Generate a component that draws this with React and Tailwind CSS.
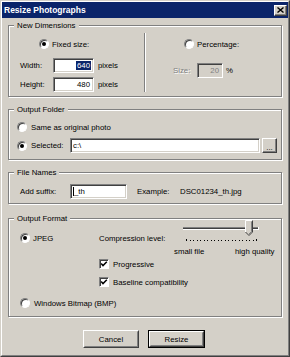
import React from "react";

function Radio({ checked }) {
  return (
    <span className="inline-flex w-[10px] h-[10px] shrink-0 rounded-full bg-white border border-t-[#808080] border-l-[#808080] border-r-white border-b-white shadow-[inset_1px_1px_0_#404040] items-center justify-center">
      {checked && <span className="w-[4px] h-[4px] rounded-full bg-black" />}
    </span>
  );
}

function Check() {
  return (
    <span className="inline-flex w-[10px] h-[10px] shrink-0 bg-white border border-t-[#808080] border-l-[#808080] border-r-white border-b-white shadow-[inset_1px_1px_0_#404040] items-center justify-center">
      <svg width="8" height="8" viewBox="0 0 8 8">
        <path d="M1.2 3.6 L3 5.6 L6.8 1.8" stroke="#000" strokeWidth="1.5" fill="none" />
      </svg>
    </span>
  );
}

function Group({ label, className, children }) {
  return (
    <div className={`relative border border-[#808080] shadow-[inset_1px_1px_0_#fff,1px_1px_0_#fff] ${className}`}>
      <span className="absolute left-[5px] top-[-5px] bg-[#d4d0c8] px-[3px] leading-[9px]">{label}</span>
      {children}
    </div>
  );
}

const fieldCls =
  "h-[15px] shrink-0 flex items-center border border-t-[#808080] border-l-[#808080] border-r-white border-b-white shadow-[inset_1px_1px_0_#404040,inset_-1px_-1px_0_#d4d0c8]";

function Slider() {
  const ticks = [];
  for (let i = 0; i <= 20; i++) {
    const x = Math.round(4 + i * 3.5);
    const end = i === 0 || i === 20;
    ticks.push(<rect key={i} x={x} y={end ? 19 : 20} width="1" height={end ? 2 : 1} fill="#000" />);
  }
  return (
    <svg width="80" height="22" viewBox="0 0 80 22" className="shrink-0">
      <rect x="1" y="7" width="75" height="1" fill="#808080" />
      <rect x="1" y="8" width="75" height="1" fill="#404040" />
      <rect x="1" y="9" width="76" height="1" fill="#fff" />
      <rect x="76" y="7" width="1" height="3" fill="#fff" />
      <path d="M63 0 H71 V12 L67 16 L63 12 Z" fill="#d4d0c8" />
      <polyline points="63.5,12 63.5,0.5 70.5,0.5" fill="none" stroke="#fff" strokeWidth="1" />
      <polyline points="70.5,0.5 70.5,12 67,15.5 63.5,12" fill="none" stroke="#404040" strokeWidth="1" />
      <polyline points="69.5,1.5 69.5,11.6 67,14" fill="none" stroke="#808080" strokeWidth="1" />
      {ticks}
    </svg>
  );
}

function Button({ children, isDefault, className }) {
  const inner = (
    <div className="h-full w-full border border-t-white border-l-white border-r-[#404040] border-b-[#404040]">
      <div className="h-full w-full border border-t-[#d4d0c8] border-l-[#d4d0c8] border-r-[#808080] border-b-[#808080] flex items-center justify-center">
        {children}
      </div>
    </div>
  );
  return (
    <div className={`h-[18px] ${className} ${isDefault ? "border border-black" : ""}`}>{inner}</div>
  );
}

export default function App() {
  return (
    <div className="w-[290px] h-[357px] bg-[#d4d0c8] border border-t-[#d4d0c8] border-l-[#d4d0c8] border-r-[#404040] border-b-[#404040] font-['Liberation_Sans',Arial,sans-serif] text-[7.8px] leading-[9px] text-black select-none">
      <div className="h-full border border-t-white border-l-white border-r-[#808080] border-b-[#808080] flex flex-col">
        {/* Title bar */}
        <div className="h-[16px] shrink-0 bg-[#0a246a] flex items-center justify-between pl-[2px] pr-[1px]">
          <span className="text-white font-bold text-[8.5px] leading-[10px]">Resize Photographs</span>
          <div className="w-[13px] h-[11px] bg-[#d4d0c8] border border-t-white border-l-white border-r-[#404040] border-b-[#404040] shadow-[inset_-1px_-1px_0_#808080] flex items-center justify-center">
            <svg width="7" height="6" viewBox="0 0 7 6">
              <path d="M0.5 0.5 L6.5 5.5 M6.5 0.5 L0.5 5.5" stroke="#000" strokeWidth="1.4" />
            </svg>
          </div>
        </div>

        <div className="px-[6px] pt-[7px] flex flex-col">
          {/* New Dimensions */}
          <Group label="New Dimensions" className="h-[72px] flex">
            <div className="w-[135px] shrink-0 flex flex-col pt-[13px]">
              <div className="pl-[30px] flex items-center gap-[3px]">
                <Radio checked />
                <span>Fixed size:</span>
              </div>
              <div className="mt-[9px] flex items-center h-[15px]">
                <span className="w-[44px] pl-[11px] shrink-0">Width:</span>
                <div className={`${fieldCls} w-[41px] bg-white justify-end pr-[2px]`}>
                  <span className="bg-[#0a246a] text-white px-[1px]">640</span>
                </div>
                <span className="ml-[4px]">pixels</span>
              </div>
              <div className="mt-[4px] flex items-center h-[15px]">
                <span className="w-[44px] pl-[11px] shrink-0">Height:</span>
                <div className={`${fieldCls} w-[41px] bg-white justify-end pr-[3px]`}>
                  <span>480</span>
                </div>
                <span className="ml-[4px]">pixels</span>
              </div>
            </div>
            <div className="w-[2px] h-[59px] mt-[7px] shrink-0 border-l border-l-[#808080] border-r border-r-white" />
            <div className="flex flex-col pt-[13px]">
              <div className="pl-[38px] flex items-center gap-[3px]">
                <Radio />
                <span>Percentage:</span>
              </div>
              <div className="mt-[14px] flex items-center h-[15px]">
                <span className="w-[51px] pl-[27px] shrink-0 text-[#808080] [text-shadow:1px_1px_0_#fff]">Size:</span>
                <div className={`${fieldCls} w-[26px] bg-[#d4d0c8] justify-end pr-[3px] text-[#808080]`}>
                  <span>20</span>
                </div>
                <span className="ml-[3px]">%</span>
              </div>
            </div>
          </Group>

          {/* Output Folder */}
          <Group label="Output Folder" className="mt-[12px] h-[51px] flex flex-col">
            <div className="pt-[12px] pl-[8px] flex items-center gap-[4px]">
              <Radio />
              <span>Same as original photo</span>
            </div>
            <div className="mt-[6px] pl-[8px] flex items-center h-[15px]">
              <Radio checked />
              <span className="ml-[4px] w-[39px] shrink-0">Selected:</span>
              <div className={`${fieldCls} w-[190px] bg-white pl-[2px]`}>
                <span>c:\</span>
              </div>
              <div className="ml-[2px] w-[15px] h-[15px] shrink-0 border border-t-white border-l-white border-r-[#404040] border-b-[#404040] shadow-[inset_-1px_-1px_0_#808080] flex items-end justify-center pb-[1px]">
                <span className="leading-[7px]">...</span>
              </div>
            </div>
          </Group>

          {/* File Names */}
          <Group label="File Names" className="mt-[12px] h-[32px] flex flex-col">
            <div className="pt-[11px] flex items-center h-[26px]">
              <span className="w-[61px] pl-[11px] shrink-0">Add suffix:</span>
              <div className={`${fieldCls} w-[57px] bg-white pl-[2px]`}>
                <span className="w-[1px] h-[9px] bg-black mr-[0px]" />
                <span>_th</span>
              </div>
              <span className="ml-[10px] w-[43px] shrink-0">Example:</span>
              <span>DSC01234_th.jpg</span>
            </div>
          </Group>

          {/* Output Format */}
          <Group label="Output Format" className="mt-[14px] h-[99px] flex flex-col">
            <div className="flex">
              <div className="w-[90px] shrink-0 pt-[14px] pl-[11px]">
                <div className="flex items-center gap-[3px]">
                  <Radio checked />
                  <span>JPEG</span>
                </div>
              </div>
              <div className="flex flex-col pt-[1px]">
                <div className="flex">
                  <span className="w-[83px] shrink-0 mt-[14px]">Compression level:</span>
                  <Slider />
                </div>
                <div className="mt-[4px] flex">
                  <span className="ml-[75px] w-[61px] shrink-0">small file</span>
                  <span>high quality</span>
                </div>
                <div className="mt-[3px] flex items-center gap-[4px]">
                  <Check />
                  <span>Progressive</span>
                </div>
                <div className="mt-[8px] flex items-center gap-[4px]">
                  <Check />
                  <span>Baseline compatibility</span>
                </div>
              </div>
            </div>
            <div className="mt-[11px] pl-[11px] flex items-center gap-[4px]">
              <Radio />
              <span>Windows Bitmap (BMP)</span>
            </div>
          </Group>

          {/* Buttons */}
          <div className="mt-[13px] flex justify-center gap-[9px] pr-[2px]">
            <Button className="w-[56px]">Cancel</Button>
            <Button className="w-[57px]" isDefault>Resize</Button>
          </div>
        </div>
      </div>
    </div>
  );
}
